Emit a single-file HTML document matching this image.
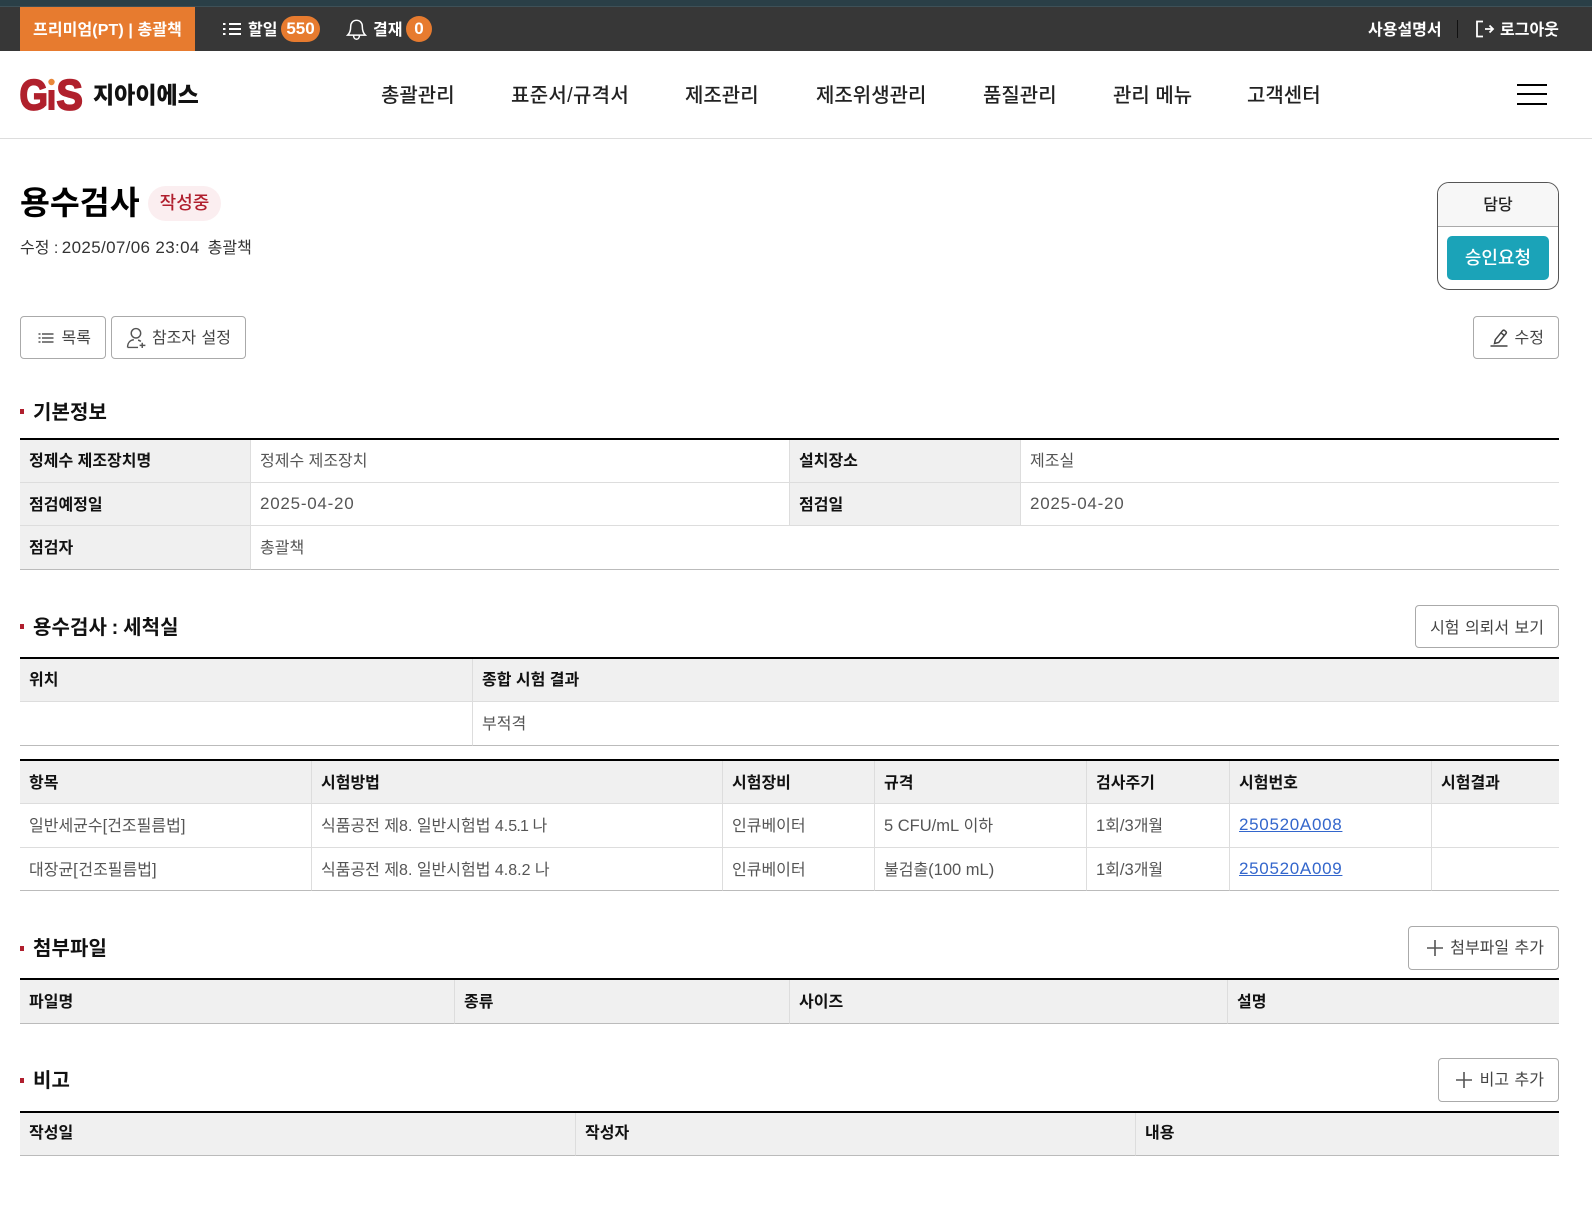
<!DOCTYPE html>
<html lang="ko"><head><meta charset="utf-8"><title>용수검사</title>
<style>
*{box-sizing:border-box}
html,body{margin:0;padding:0;background:#fff}
body{width:1592px;height:1211px;position:relative;overflow:hidden;font-family:"Liberation Sans","Noto Sans CJK KR",sans-serif;font-size:16px;color:#333}
.a{position:absolute;white-space:nowrap}
.n{font-size:17px}
td .n{position:relative;top:1px}
.m{font-size:16.5px}
.top{color:#fff;font-weight:700;font-size:16px;line-height:24px;top:19px}
.nav{font-size:20px;font-weight:500;color:#222;line-height:30px;top:81px}
.bar{position:absolute;background:#b01f2e;left:20px;width:4px;height:5px}
.h2{position:absolute;left:33px;font-size:20px;font-weight:700;color:#111;line-height:30px;white-space:nowrap;letter-spacing:.1px}
.btn{position:absolute;height:43px;border:1px solid #aaa;border-radius:4px;background:#fff;color:#444;display:flex;align-items:center;justify-content:flex-end;padding:2px 14px 0 0;white-space:nowrap;line-height:20px;word-spacing:1px}
.btn svg{display:block;position:relative;top:-1px}
table{position:absolute;left:20px;width:1539px;table-layout:fixed;border-collapse:separate;border-spacing:0;border-top:2px solid #000}
th,td{padding:0 9px 4px;text-align:left;font-size:16px;border-right:1px solid #ddd;border-bottom:1px solid #ddd;height:43px;white-space:nowrap;overflow:hidden}
th{background:#f0f0f0;color:#111;font-weight:700}
td{color:#555;font-weight:400}
tr>*:last-child{border-right:0}
tr:last-child>*{border-bottom:1px solid #bbb}
a{color:#3366cc;text-decoration:underline}
.p2>*{padding-bottom:2px}
.p3>*{padding-bottom:3px}
</style></head><body>

<div class="a" style="left:0;top:0;width:1592px;height:6px;background:#2a3f47"></div>
<div class="a" style="left:0;top:6px;width:1592px;height:1px;background:#3e5057"></div>
<div class="a" style="left:0;top:7px;width:1592px;height:44px;background:#373737"></div>
<div class="a" style="left:20px;top:7px;width:175px;height:44px;background:#e77b2f"></div>
<div class="a top" style="left:33px;letter-spacing:.1px">프리미엄(PT) | 총괄책</div>

<svg class="a" style="left:222px;top:21px" width="20" height="16" viewBox="0 0 20 16" fill="none" stroke="#fff" stroke-width="2"><path d="M1 3h2.500M1 8h2.500M1 13h2.500M7 3h12M7 8h12M7 13h12"/></svg>
<div class="a top" style="left:248px">할일</div>
<div class="a" style="left:281px;top:16px;width:39px;height:26px;border-radius:13px;background:#e77b2f;color:#fff;font-weight:700;font-size:17px;line-height:26px;text-align:center">550</div>
<svg class="a" style="left:346px;top:18px" width="21" height="24" viewBox="0 0 22 26" fill="none" stroke="#fff" stroke-width="1.600"><path d="M11 2.500c-4 0-6.300 3-6.300 6.800 0 4.600-1 7-3.200 9.200h19c-2.200-2.200-3.200-4.600-3.200-9.200C17.300 5.500 15 2.500 11 2.500zM7.800 18.800c0 2.500 1.400 4.200 3.200 4.200s3.200-1.700 3.200-4.200"/></svg>
<div class="a top" style="left:373px">결재</div>
<div class="a" style="left:406px;top:16px;width:26px;height:26px;border-radius:13px;background:#e77b2f;color:#fff;font-weight:700;font-size:17px;line-height:26px;text-align:center">0</div>

<div class="a top" style="left:1368px">사용설명서</div>
<div class="a" style="left:1457px;top:20px;width:1px;height:18px;background:#111"></div>
<svg class="a" style="left:1475px;top:20px" width="20" height="18" viewBox="0 0 20 18" fill="none" stroke="#fff" stroke-width="1.800"><path d="M8 1.500H2v15h6M10 9h8M14.500 5.500L18 9l-3.500 3.500"/></svg>
<div class="a top" style="left:1500px">로그아웃</div>

<div class="a" style="left:0;top:138px;width:1592px;height:1px;background:#ddd"></div>
<svg class="a" style="left:18px;top:72px" width="70" height="44" viewBox="0 0 70 44" font-family="Liberation Sans" font-weight="700" font-size="43" fill="#b0202c" stroke="#b0202c" stroke-width="1.800">
<text transform="translate(1.500 37.500) scale(.85 1)">G</text>
<rect x="30.500" y="18" width="6" height="20" stroke="none"/>
<circle cx="33.500" cy="10" r="3.200" fill="#e8883a" stroke="none"/>
<text transform="translate(38.500 37.500) scale(.92 1)">S</text>
</svg>
<div class="a" style="left:93px;top:76px;font-size:23px;font-weight:900;color:#111;line-height:38px">지아이에스</div>

<div class="a nav" style="left:381px">총괄관리</div>
<div class="a nav" style="left:511px;letter-spacing:.3px">표준서/규격서</div>
<div class="a nav" style="left:685px">제조관리</div>
<div class="a nav" style="left:816px">제조위생관리</div>
<div class="a nav" style="left:983px">품질관리</div>
<div class="a nav" style="left:1113px">관리 메뉴</div>
<div class="a nav" style="left:1247px">고객센터</div>
<div class="a" style="left:1517px;top:84px;width:30px;height:2px;background:#000"></div>
<div class="a" style="left:1517px;top:93px;width:30px;height:2px;background:#000"></div>
<div class="a" style="left:1517px;top:103px;width:30px;height:2px;background:#000"></div>

<div class="a" style="left:20px;top:180px;font-size:32.500px;font-weight:700;color:#000;line-height:46px">용수검사</div>
<div class="a" style="left:148px;top:186px;width:73px;height:35px;border-radius:18px;background:#fbeef0;color:#b01f2e;font-size:18px;font-weight:500;line-height:35px;text-align:center">작성중</div>
<div class="a" style="left:20px;top:236px;line-height:24px;color:#333;white-space:pre">수정 : <span class="n" style="letter-spacing:.35px;margin-left:-1px">2025/07/06 23:04</span><span style="margin-left:-1px">  총괄책</span></div>

<div class="a" style="left:1437px;top:182px;width:122px;height:108px;border:1px solid #555;border-radius:12px;overflow:hidden;background:#fff">
<div style="height:44px;background:#f7f7f7;border-bottom:1px solid #aaa;text-align:center;line-height:45px;font-size:16px;font-weight:500;color:#222">담당</div>
</div>
<div class="a" style="left:1447px;top:236px;width:102px;height:44px;border-radius:5px;background:#1ba3b8;color:#fff;font-size:18px;font-weight:500;line-height:44px;text-align:center">승인요청</div>

<div class="btn" style="left:20px;top:316px;width:86px"><svg width="16" height="12" viewBox="0 0 16 12" fill="none" stroke="#555" stroke-width="1.500" style="margin-right:8px"><path d="M.5 2h2M.5 6h2M.5 10h2M4 2h11.500M4 6h11.500M4 10h11.500"/></svg>목록</div>
<div class="btn" style="left:111px;top:316px;width:135px"><svg width="22" height="22" viewBox="0 0 21 21" fill="none" stroke="#555" stroke-width="1.400" style="margin-right:4px"><circle cx="9.500" cy="6" r="4.500"/><path d="M1.500 19.500c0-4.500 2.500-7 6-7.300M1.500 19.500h10M11.500 12.500c1 .2 2 .7 2.700 1.300M15.500 15v5M13 17.500h5.500"/></svg>참조자 설정</div>
<div class="btn" style="left:1473px;top:316px;width:86px"><svg width="18" height="19" viewBox="0 0 18 19" fill="none" stroke="#444" stroke-width="1.500" style="margin-right:7px"><path d="M4.500 15.500l.8-3.800L12.500 2.800c.6-.7 1.500-.8 2.200-.2l1 .8c.7.600.8 1.500.2 2.200L8.700 14.500zM11 4.800l3.300 2.700"/><path d="M.5 18h17" stroke-width="1.500"/></svg>수정</div>

<div class="bar" style="top:409px"></div>
<div class="h2" style="top:398px">기본정보</div>
<table style="top:438px">
<colgroup><col style="width:231px"><col style="width:539px"><col style="width:231px"><col style="width:538px"></colgroup>
<tr><th>정제수 제조장치명</th><td>정제수 제조장치</td><th>설치장소</th><td>제조실</td></tr>
<tr class="p2"><th>점검예정일</th><td><span class="n" style="letter-spacing:.75px">2025-04-20</span></td><th>점검일</th><td><span class="n" style="letter-spacing:.75px">2025-04-20</span></td></tr>
<tr><th style="height:44px">점검자</th><td colspan="3" style="height:44px">총괄책</td></tr>
</table>

<div class="bar" style="top:624px"></div>
<div class="h2" style="top:613px;word-spacing:-1px">용수검사 : 세척실</div>
<div class="btn" style="left:1415px;top:605px;width:144px;padding-top:4px">시험 의뢰서 보기</div>
<table style="top:657px">
<colgroup><col style="width:453px"><col style="width:1086px"></colgroup>
<tr><th>위치</th><th>종합 시험 결과</th></tr>
<tr><td style="height:44px"></td><td style="height:44px">부적격</td></tr>
</table>
<table style="top:759px">
<colgroup><col style="width:292px"><col style="width:411px"><col style="width:152px"><col style="width:212px"><col style="width:143px"><col style="width:202px"><col style="width:127px"></colgroup>
<tr class="p2"><th>항목</th><th>시험방법</th><th>시험장비</th><th>규격</th><th>검사주기</th><th>시험번호</th><th>시험결과</th></tr>
<tr><td style="height:44px">일반세균수<span class="m">[</span>건조필름법<span class="m">]</span></td><td style="height:44px">식품공전 제8. 일반시험법 4.<span style="letter-spacing:-.8px">5.1</span> 나</td><td style="height:44px">인큐베이터</td><td style="height:44px"><span class="m">5 CFU/mL</span> 이하</td><td style="height:44px"><span class="m">1</span>회<span class="m">/3</span>개월</td><td style="height:44px"><a class="n" style="letter-spacing:.7px">250520A008</a></td><td style="height:44px"></td></tr>
<tr class="p3"><td>대장균<span class="m" style="letter-spacing:.6px">[</span>건조필름법<span class="m" style="letter-spacing:.6px">]</span></td><td>식품공전 제8. 일반시험법 4.8.2 나</td><td>인큐베이터</td><td>불검출<span class="m">(100 mL)</span></td><td><span class="m">1</span>회<span class="m">/3</span>개월</td><td><a class="n" style="letter-spacing:.7px">250520A009</a></td><td></td></tr>
</table>

<div class="bar" style="top:946px"></div>
<div class="h2" style="top:934px">첨부파일</div>
<div class="btn" style="left:1408px;top:926px;width:151px;height:44px"><svg width="16" height="16" viewBox="0 0 16 16" fill="none" stroke="#555" stroke-width="1.600" style="margin-right:7px"><path d="M8 0v16M0 8h16"/></svg>첨부파일 추가</div>
<table style="top:978px">
<colgroup><col style="width:435px"><col style="width:335px"><col style="width:438px"><col style="width:331px"></colgroup>
<tr><th style="height:44px">파일명</th><th style="height:44px">종류</th><th style="height:44px">사이즈</th><th style="height:44px">설명</th></tr>
</table>

<div class="bar" style="top:1078px"></div>
<div class="h2" style="top:1066px">비고</div>
<div class="btn" style="left:1438px;top:1058px;width:121px;height:44px"><svg width="16" height="16" viewBox="0 0 16 16" fill="none" stroke="#555" stroke-width="1.600" style="margin-right:8px"><path d="M8 0v16M0 8h16"/></svg>비고 추가</div>
<table style="top:1111px">
<colgroup><col style="width:556px"><col style="width:560px"><col style="width:423px"></colgroup>
<tr style="height:43px"><th style="padding-bottom:6px">작성일</th><th style="padding-bottom:6px">작성자</th><th style="padding-bottom:6px">내용</th></tr>
</table>

</body></html>
